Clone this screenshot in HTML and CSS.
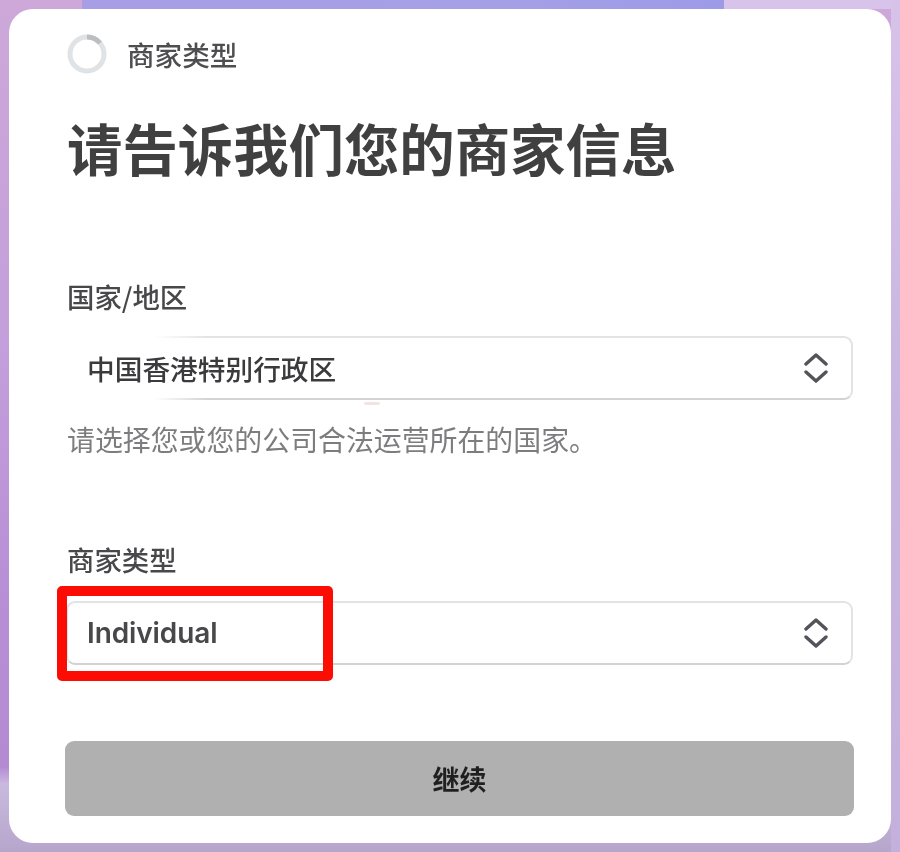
FILE: index.html
```html
<!DOCTYPE html>
<html lang="zh-CN">
<head>
<meta charset="utf-8">
<title>商家类型</title>
<link rel="stylesheet" href="styles.css">
</head>
<body>
<div class="backdrop-strip"></div>
<div class="backdrop-glow"></div>
<main class="card">
  <header class="step">
    <svg class="ring" viewBox="0 0 40 40" aria-hidden="true">
      <circle cx="20" cy="20" r="17" fill="none" stroke="#dfe3e5" stroke-width="5"/>
      <path d="M20 3A17 17 0 0 1 33 9" fill="none" stroke="#bcbebf" stroke-width="5"/>
    </svg>
    <span class="step-name">商家类型</span>
  </header>
  <h1 class="title">请告诉我们您的商家信息</h1>
  <section class="field field-country">
    <label class="label">国家/地区</label>
    <div class="select select-country">
      <span class="value">中国香港特别行政区</span>
      <svg class="chev" viewBox="0 0 26 30" aria-hidden="true"><path d="M3 11L13 2L23 11M3 19L13 28L23 19"/></svg>
    </div>
    <p class="hint">请选择您或您的公司合法运营所在的国家。</p>
  </section>
  <section class="field field-type">
    <label class="label">商家类型</label>
    <div class="select select-type">
      <span class="value value-latin">Individual</span>
      <svg class="chev" viewBox="0 0 26 30" aria-hidden="true"><path d="M3 11L13 2L23 11M3 19L13 28L23 19"/></svg>
      <div class="highlight"></div>
    </div>
  </section>
  <button class="continue" type="button">继续</button>
</main>
</body>
</html>
```
FILE: styles.css
```css
* { box-sizing: border-box; }
html, body { margin: 0; height: 852px; overflow: hidden; }
body {
  position: relative;
  padding: 9px;
  background: linear-gradient(180deg, #cda8d9 0%, #c39fdb 40%, #b88fd6 70%, #b48ad3 90%, #c9b9df 92%, #b7a6cb 100%);
  font-family: "Noto Sans CJK SC", "Noto Sans", sans-serif;
  color: #3f3f41;
}
body::after {
  content: "";
  position: absolute;
  top: 0;
  right: 0;
  bottom: 0;
  width: 9px;
  background: linear-gradient(180deg, #d7c3ea 0%, #c8b5df 50%, #c4b0dc 100%);
}
.backdrop-strip {
  position: absolute;
  top: 0;
  left: 82px;
  width: 642px;
  height: 9px;
  background: linear-gradient(90deg, #a79ee6, #a6a0e6 60%, #9d9ae8);
}
.backdrop-glow {
  position: absolute;
  top: 0;
  left: 724px;
  right: 0;
  height: 9px;
  background: #d8c3ea;
}
.card {
  position: relative;
  z-index: 1;
  width: 882px;
  height: 834px;
  padding: 25px 38px 0 56px;
  background: #fff;
  border-radius: 24px;
  filter: blur(0.45px);
}
.step {
  display: flex;
  align-items: center;
  gap: 20px;
  height: 40px;
  margin-left: 2px;
}
.ring { width: 40px; height: 40px; flex: none; }
.step-name { font-size: 27.6px; line-height: 40px; font-weight: 500; color: #4e4e50; }
.title {
  margin: 37px 0 0 2px;
  font-size: 55.4px;
  line-height: 72px;
  font-weight: 700;
  color: #404041;
  white-space: nowrap;
}
.field { display: flex; flex-direction: column; }
.field-country { margin-top: 93px; }
.field-type { margin-top: 80px; }
.label {
  margin-left: 2px;
  font-size: 27.4px;
  line-height: 40px;
  font-weight: 500;
  color: #48484a;
}
.select {
  position: relative;
  display: flex;
  align-items: center;
  justify-content: space-between;
  width: 787px;
  height: 64px;
  margin: 19px 0 0 1px;
  padding: 0 22px 0 19px;
  border: 2px solid #e2e3e4;
  border-bottom-color: #d2d3d5;
  border-radius: 9px;
  background: #fff;
}
.select-type { margin-top: 22px; }
.select-country { margin-top: 20px; }
.select-country::before {
  content: "";
  position: absolute;
  left: -40px;
  top: -8px;
  width: 180px;
  height: 80px;
  background: linear-gradient(90deg, #fff 70%, rgba(255, 255, 255, 0));
}
.select-country::after {
  content: "";
  position: absolute;
  left: 296px;
  bottom: -7px;
  width: 16px;
  height: 3px;
  border-radius: 2px;
  background: #f5e3e1;
}
.value { position: relative; font-size: 27.7px; line-height: 40px; font-weight: 500; color: #3b3b3d; }
.value-latin { font-family: Inter, "Noto Sans", sans-serif; font-size: 28px; font-weight: 600; color: #48484a; letter-spacing: -0.1px; }
.chev { width: 26px; height: 30px; flex: none; }
.chev path { fill: none; stroke: #525459; stroke-width: 3.4; stroke-linecap: round; stroke-linejoin: round; }
.hint {
  margin: 19px 0 0 2px;
  font-size: 27.9px;
  line-height: 40px;
  color: #7d7d7f;
  white-space: nowrap;
}
.highlight {
  position: absolute;
  left: -11px;
  top: -17px;
  width: 276px;
  height: 95px;
  border: 10px solid #fb0d04;
  border-radius: 5px;
}
.continue {
  display: block;
  width: 789px;
  height: 75px;
  margin: 76px 0 0 0;
  border: 0;
  border-radius: 9px;
  background: #b0b0b0;
  color: #1f1f1f;
  font-family: inherit;
  font-size: 27px;
  font-weight: 700;
}
```
